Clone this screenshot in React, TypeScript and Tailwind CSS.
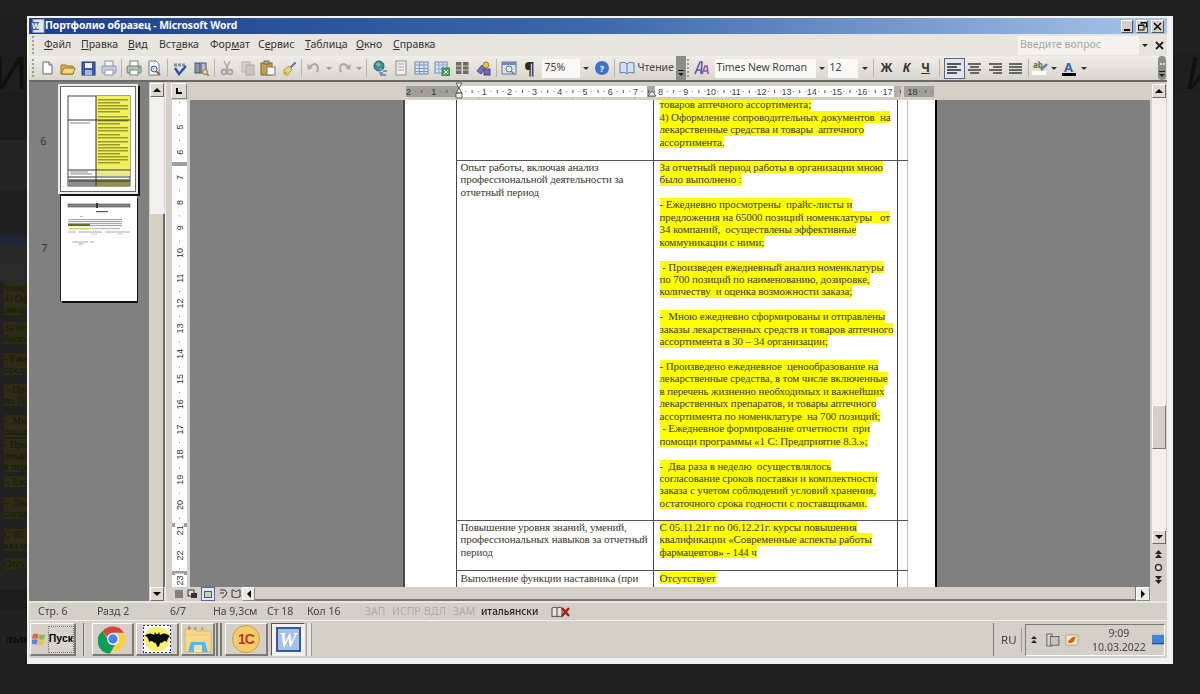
import React from 'react';

const uiFont = "font-['Noto_Sans','Liberation_Sans',sans-serif]";

const Gripper = ({ className = '' }: { className?: string }) => (
  <div className={`flex flex-col justify-center gap-[2px] ${className}`}>
    {[0, 1, 2, 3, 4].map((i) => (
      <div key={i} className="h-[2px] w-[2px] bg-[#a09c94]" />
    ))}
  </div>
);

const Sep = ({ className = 'w-[5px]' }: { className?: string }) => (
  <div className={`flex h-full items-center justify-center ${className}`}>
    <div className="h-[18px] w-[1px] bg-[#b8b4ac]" />
  </div>
);

const Drop = ({ className = 'w-[10px]', color = 'border-t-[#333]' }: { className?: string; color?: string }) => (
  <div className={`flex items-center justify-center ${className}`}>
    <div className={`h-0 w-0 border-x-[3px] border-t-[3px] border-x-transparent ${color}`} />
  </div>
);

const Slot = ({ children, className = 'w-[20.5px]' }: { children: React.ReactNode; className?: string }) => (
  <div className={`flex shrink-0 items-center justify-center ${className}`}>{children}</div>
);

const Ico = ({ children, w = 16 }: { children: React.ReactNode; w?: number }) => (
  <svg width={w} height={16} viewBox={`0 0 ${w} 16`}>
    {children}
  </svg>
);

const MenuItem = ({ before = '', hot, after, className }: { before?: string; hot: string; after: string; className: string }) => (
  <div className={`shrink-0 text-[10.5px] text-[#333] ${className}`}>
    {before}
    <span className="underline">{hot}</span>
    {after}
  </div>
);

const Toolbar = () => (
  <div className={`flex h-[24px] items-center bg-gradient-to-b from-[#f0eee8] to-[#d8d5cd] pl-[3px] ${uiFont}`}>
    <Gripper className="w-[5px]" />
    <Slot>
      <Ico>
        <path d="M4 2h6l3 3v9H4z" fill="#fff" stroke="#5a6a80" />
        <path d="M10 2v3h3" fill="#d8dce4" stroke="#5a6a80" />
      </Ico>
    </Slot>
    <Slot>
      <Ico>
        <path d="M1 5h5l1 1h6v8H1z" fill="#e6b04a" stroke="#96702a" />
        <path d="M4 8h11l-2 6H1z" fill="#f6d67c" stroke="#96702a" />
      </Ico>
    </Slot>
    <Slot>
      <Ico>
        <rect x="2" y="2" width="13" height="13" fill="#3c5aa8" stroke="#24387c" />
        <rect x="5" y="3" width="7" height="5" fill="#eef2fa" />
        <rect x="5" y="10" width="7" height="5" fill="#a8b4d4" />
      </Ico>
    </Slot>
    <Slot>
      <Ico>
        <rect x="4" y="1" width="8" height="6" fill="#f4f4f4" stroke="#8c94a8" />
        <rect x="1" y="6" width="14" height="7" rx="1" fill="#c8d0e0" stroke="#8c94a8" />
        <rect x="4" y="10" width="8" height="5" fill="#fff" stroke="#8c94a8" />
      </Ico>
    </Slot>
    <Sep className="w-[4.5px]" />
    <Slot>
      <Ico>
        <rect x="4" y="1" width="8" height="6" fill="#fff" stroke="#78847c" />
        <rect x="1" y="6" width="14" height="7" rx="1" fill="#b4c4b8" stroke="#6c7c70" />
        <rect x="4" y="10" width="8" height="5" fill="#f8f8f8" stroke="#78847c" />
        <circle cx="13" cy="8" r="1" fill="#4ca04c" />
      </Ico>
    </Slot>
    <Slot>
      <Ico>
        <path d="M3 1h7l3 3v11H3z" fill="#fff" stroke="#6c7890" />
        <circle cx="8" cy="9" r="3" fill="#cfe0f4" stroke="#3c5a98" />
        <path d="M10 11l4 4" stroke="#8c6c30" strokeWidth="2" />
      </Ico>
    </Slot>
    <Sep className="w-[5.5px]" />
    <Slot>
      <Ico>
        <path d="M2 5h12" stroke="#7c8ca8" strokeWidth="3" strokeDasharray="3 1" />
        <path d="M3 8l4 6 7-8" stroke="#2c50a8" strokeWidth="2.4" fill="none" />
      </Ico>
    </Slot>
    <Slot>
      <Ico>
        <rect x="2" y="3" width="5" height="10" fill="#8c94b0" stroke="#4c5474" />
        <rect x="8" y="3" width="5" height="10" fill="#b4bcd4" stroke="#4c5474" />
        <circle cx="12" cy="12" r="2.5" fill="#e8d8a0" stroke="#8c7830" />
        <path d="M14 14l2 2" stroke="#8c7830" strokeWidth="1.6" />
      </Ico>
    </Slot>
    <Sep className="w-[6px]" />
    <Slot>
      <Ico>
        <path d="M5 1l4 8M11 1L7 9" stroke="#a8a8a8" strokeWidth="1.4" />
        <circle cx="5" cy="12" r="2.4" fill="none" stroke="#a0a0a0" strokeWidth="1.6" />
        <circle cx="11" cy="12" r="2.4" fill="none" stroke="#a0a0a0" strokeWidth="1.6" />
      </Ico>
    </Slot>
    <Slot>
      <Ico>
        <rect x="2" y="2" width="8" height="10" fill="#d4d2cc" stroke="#b4b2ac" />
        <rect x="6" y="5" width="8" height="10" fill="#c8c6c0" stroke="#aaa8a2" />
      </Ico>
    </Slot>
    <Slot>
      <Ico>
        <rect x="1" y="3" width="11" height="12" fill="#c89c50" stroke="#806430" />
        <rect x="4" y="1" width="5" height="3" fill="#b8b4ac" stroke="#6c6860" />
        <rect x="7" y="7" width="8" height="8" fill="#f8f8f0" stroke="#78787c" />
      </Ico>
    </Slot>
    <Slot>
      <Ico>
        <path d="M9 7l5-5 1 1-5 5z" fill="#6c86b8" stroke="#40588c" strokeWidth=".6" />
        <path d="M3 10l5-4 3 3-4 6H4l1-3-2 2z" fill="#ecd06c" stroke="#a88c34" strokeWidth=".7" />
      </Ico>
    </Slot>
    <Sep />
    <Slot className="w-[18.5px]">
      <Ico>
        <path d="M4 7l5-3c4 0 5 4 3 8" fill="none" stroke="#a8a8a4" strokeWidth="2" />
        <path d="M2 4l1 6 5-2z" fill="#a8a8a4" />
      </Ico>
    </Slot>
    <Drop className="w-[12px]" color="border-t-[#999]" />
    <Slot>
      <Ico>
        <path d="M12 7L7 4c-4 0-5 4-3 8" fill="none" stroke="#a8a8a4" strokeWidth="2" />
        <path d="M14 4l-1 6-5-2z" fill="#a8a8a4" />
      </Ico>
    </Slot>
    <Drop className="w-[8px]" color="border-t-[#999]" />
    <Sep className="w-[7px]" />
    <Slot>
      <Ico>
        <circle cx="7" cy="6" r="5" fill="#3c8c9c" stroke="#2c5c70" />
        <path d="M4 4l3-2 2 3-3 2zM7 8l3 1-1 2z" fill="#7cc47c" />
        <path d="M7 13h4M11 11h4M8 15h6" stroke="#5c7cb0" strokeWidth="1.6" />
      </Ico>
    </Slot>
    <Slot>
      <Ico>
        <rect x="3" y="1" width="10" height="14" fill="#f0f0ec" stroke="#8c8c84" />
        <path d="M5 4h6M5 7h6M5 10h6" stroke="#a0a0a8" />
      </Ico>
    </Slot>
    <Slot>
      <Ico>
        <rect x="2" y="2" width="13" height="12" fill="#dce6f6" stroke="#6a86b6" />
        <path d="M2 5h13M2 8.500h13M2 11.500h13M6.500 2v12M11 2v12" stroke="#7c96c4" />
      </Ico>
    </Slot>
    <Slot>
      <Ico>
        <rect x="1" y="2" width="12" height="11" fill="#dce6f6" stroke="#6a86b6" />
        <path d="M1 5h12M1 9h12M5 2v11M9 2v11" stroke="#8ca4cc" />
        <rect x="8" y="8" width="8" height="8" fill="#4ca85c" stroke="#2c7c40" />
        <path d="M10 10l4 4M14 10l-4 4" stroke="#fff" />
      </Ico>
    </Slot>
    <Slot>
      <Ico>
        <rect x="2" y="2" width="5.500" height="12" fill="#6c6c64" />
        <rect x="9" y="2" width="5.500" height="12" fill="#6c6c64" />
        <path d="M2 6h5.500M2 10h5.500M9 6h5.500M9 10h5.500" stroke="#c8c8c0" />
      </Ico>
    </Slot>
    <Slot>
      <Ico>
        <path d="M2 11l5-6 3 4-4 5z" fill="#6878c0" stroke="#44508c" />
        <circle cx="11" cy="5" r="3" fill="#e8c050" stroke="#a08420" />
        <rect x="9" y="9" width="6" height="6" fill="#7c64b8" stroke="#50408c" />
      </Ico>
    </Slot>
    <Sep className="w-[6px]" />
    <Slot>
      <Ico>
        <rect x="1" y="2" width="14" height="12" fill="#d8e4f4" stroke="#5c7898" />
        <rect x="1" y="2" width="14" height="3" fill="#6c8cb8" />
        <circle cx="8" cy="9" r="3" fill="#f4f4f0" stroke="#707c70" />
        <path d="M10 11l3 3" stroke="#707c70" strokeWidth="1.6" />
      </Ico>
    </Slot>
    <Slot className="w-[20px] text-[16px] font-bold leading-none text-[#2a2a2a]">¶</Slot>
    <div className="ml-[2px] flex h-[19px] w-[38px] shrink-0 items-center bg-[#faf9f6] pl-[3px] text-[10.5px] text-[#444]">75%</div>
    <Drop className="w-[12px]" />
    <Slot className="w-[21px]">
      <div className="flex h-[14px] w-[14px] items-center justify-center rounded-full bg-[#3c74c8] text-[9px] font-bold leading-none text-white">?</div>
    </Slot>
    <Sep className="w-[4px]" />
    <Slot className="w-[21px]">
      <Ico>
        <path d="M1 3c3-1 5-1 7 1 2-2 4-2 7-1v10c-3-1-5-1-7 1-2-2-4-2-7-1z" fill="#d4dff0" stroke="#5c7ca8" />
        <path d="M8 4v10" stroke="#5c7ca8" />
      </Ico>
    </Slot>
    <div className="w-[38px] shrink-0 text-[10.5px] text-[#444]">Чтение</div>
    <div className="flex h-[24px] w-[10px] shrink-0 flex-col items-center justify-end bg-[#8c8c88] pb-[4px]">
      <div className="mb-[2px] h-[1px] w-[6px] bg-[#222]" />
      <div className="h-0 w-0 border-x-[3px] border-t-[3px] border-x-transparent border-t-[#222]" />
    </div>
    <Gripper className="ml-[1px] w-[3px]" />
    <Slot className="ml-[2px] w-[20px]">
      <svg width="16" height="16" viewBox="0 0 16 16">
        <path d="M1 14L6 2h2l-1 12M2.500 10h5" fill="none" stroke="#4c5ca8" strokeWidth="1.6" />
        <path d="M8 14l3-8h2l1 8M9.500 11h4" fill="none" stroke="#a04ca0" strokeWidth="1.6" />
      </svg>
    </Slot>
    <div className="ml-[3px] flex h-[19px] w-[101px] shrink-0 items-center bg-[#faf9f6] pl-[2px] text-[10.5px] tracking-[-0.1px] text-[#444]">Times New Roman</div>
    <Drop className="w-[12px]" />
    <div className="flex h-[19px] w-[30px] shrink-0 items-center bg-[#faf9f6] pl-[2px] text-[10.5px] text-[#444]">12</div>
    <Drop className="ml-[1px] w-[12px]" />
    <Sep className="w-[6px]" />
    <Slot className="w-[20px] text-[12px] font-bold text-[#333]">Ж</Slot>
    <Slot className="w-[20px] text-[12px] font-bold italic text-[#333]">К</Slot>
    <Slot className="w-[18px] text-[12px] font-bold text-[#333] underline">Ч</Slot>
    <Sep className="w-[9px]" />
    <div className="flex h-[21px] w-[21px] shrink-0 flex-col items-center justify-center gap-[1px] border border-[#52699c] bg-[#dfe6f0]">
      <div className="h-[2px] w-[14px] bg-[#555]" />
      <div className="ml-[2px] h-[2px] w-[10px] self-start bg-[#555]" />
      <div className="h-[2px] w-[14px] bg-[#555]" />
      <div className="ml-[2px] h-[2px] w-[10px] self-start bg-[#555]" />
    </div>
    <div className="flex w-[20px] shrink-0 flex-col items-center gap-[1px]">
      <div className="h-[2px] w-[13px] bg-[#666]" />
      <div className="h-[2px] w-[9px] bg-[#666]" />
      <div className="h-[2px] w-[13px] bg-[#666]" />
      <div className="h-[2px] w-[9px] bg-[#666]" />
    </div>
    <div className="flex w-[20px] shrink-0 flex-col items-end gap-[1px] pr-[3px]">
      <div className="h-[2px] w-[13px] bg-[#666]" />
      <div className="h-[2px] w-[9px] bg-[#666]" />
      <div className="h-[2px] w-[13px] bg-[#666]" />
      <div className="h-[2px] w-[9px] bg-[#666]" />
    </div>
    <div className="flex w-[21px] shrink-0 flex-col items-center gap-[1px]">
      <div className="h-[2px] w-[13px] bg-[#666]" />
      <div className="h-[2px] w-[13px] bg-[#666]" />
      <div className="h-[2px] w-[13px] bg-[#666]" />
      <div className="h-[2px] w-[13px] bg-[#666]" />
    </div>
    <Sep className="w-[5px]" />
    <Slot className="w-[19px]">
      <svg width="16" height="16" viewBox="0 0 16 16">
        <rect x="0" y="11" width="14" height="4" fill="#fcfcf8" />
        <text x="1" y="8" fontSize="8" fontWeight="700" fill="#5c6c30">ab</text>
        <path d="M9 10l6-6" stroke="#5c7cb0" strokeWidth="2.4" />
      </svg>
    </Slot>
    <Drop className="w-[9px]" />
    <Slot className="ml-[2px] w-[16px]">
      <div className="flex flex-col items-center">
        <div className="text-[13px] font-bold leading-[12px] text-[#3c64a8]">A</div>
        <div className="h-[3px] w-[14px] bg-black" />
      </div>
    </Slot>
    <Drop className="ml-[2px] w-[10px]" />
    <div className="flex-1" />
    <div className="mr-[1px] flex h-[24px] w-[8px] shrink-0 flex-col items-center justify-end gap-[2px] rounded-sm bg-[#8c8c88] pb-[3px]">
      <div className="mb-[4px] flex gap-[1px]">
        <div className="h-[2px] w-[2px] bg-[#ddd]" />
        <div className="h-[2px] w-[2px] bg-[#ddd]" />
      </div>
      <div className="h-[1px] w-[6px] bg-[#222]" />
      <div className="h-0 w-0 border-x-[3px] border-t-[3px] border-x-transparent border-t-[#222]" />
    </div>
  </div>
);

const Arrow = ({ dir }: { dir: 'up' | 'down' | 'left' | 'right' }) => {
  if (dir === 'up') return <div className="h-0 w-0 border-x-[4px] border-b-[4px] border-x-transparent border-b-black" />;
  if (dir === 'down') return <div className="h-0 w-0 border-x-[4px] border-t-[4px] border-x-transparent border-t-black" />;
  if (dir === 'left') return <div className="h-0 w-0 border-y-[4px] border-r-[4px] border-y-transparent border-r-black" />;
  return <div className="h-0 w-0 border-y-[4px] border-l-[4px] border-y-transparent border-l-black" />;
};

const ScrollBtn = ({ dir, className = '' }: { dir: 'up' | 'down' | 'left' | 'right'; className?: string }) => (
  <div className={`flex h-[14px] w-[14px] shrink-0 items-center justify-center border border-b-[#6c6c6c] border-l-white border-r-[#6c6c6c] border-t-white bg-[#dedbd3] ${className}`}>
    <Arrow dir={dir} />
  </div>
);

const BrowseButtons = () => (
  <div className="flex flex-1 flex-col items-center justify-between pb-[3px] pt-[6px]">
    <svg width="9" height="9" viewBox="0 0 9 9"><path d="M4.500 0L8 4H1zM4.500 4L8 8H1z" fill="#222" /></svg>
    <svg width="9" height="9" viewBox="0 0 9 9"><circle cx="4.500" cy="4.500" r="3" fill="#e6e4de" stroke="#333" strokeWidth="1.400" /></svg>
    <svg width="9" height="9" viewBox="0 0 9 9"><path d="M1 1h7L4.500 5zM1 5h7L4.500 9z" fill="#222" /></svg>
  </div>
);

const ThumbPage6 = () => (
  <svg width="76" height="106" viewBox="0 0 76 106">
    <rect width="76" height="106" fill="#fff" />
    <rect x="7" y="9" width="62" height="90" fill="none" stroke="#444" strokeWidth="1" />
    <rect x="35" y="9" width="34" height="74" fill="#f0f060" />
    {[12, 15, 18, 21, 24, 29, 33, 36, 40, 43, 47, 50, 54, 57, 60, 63, 66, 69, 72, 75].map((y, i) => (
      <rect key={y} x="37" y={y} width={i % 3 === 1 ? 22 : 30} height="1.500" fill="#9a9a30" />
    ))}
    <rect x="35" y="84" width="34" height="5" fill="#ecec80" />
    <rect x="35" y="92" width="34" height="7" fill="#8f8f50" />
    <rect x="8" y="92" width="27" height="7" fill="#8c8c8c" />
    <path d="M35 9v90M7 33h62M7 83h62M7 90h62M7 94h62" stroke="#333" strokeWidth="1" />
    <path d="M9 36h20M9 85h18M9 87h22" stroke="#888" strokeWidth="1.200" />
  </svg>
);

const ThumbPage7 = () => (
  <svg width="76" height="105" viewBox="0 0 76 105">
    <rect width="76" height="105" fill="#fff" />
    <rect x="7" y="8" width="62" height="3" fill="#888" stroke="#444" strokeWidth=".6" />
    <rect x="35" y="7" width="2" height="5" fill="#333" />
    <rect x="35" y="15" width="12" height="1.200" fill="#555" />
    <rect x="19" y="20" width="3" height="1" fill="#bbb" />
    {[23, 25, 27, 29].map((y) => (
      <rect key={y} x="7" y={y} width="54" height="1.200" fill="#aaa" />
    ))}
    <rect x="7" y="28" width="22" height="2" fill="#6a6a20" />
    <rect x="8" y="32" width="22" height="1.500" fill="#d6d650" />
    <rect x="31" y="32" width="28" height="1.200" fill="#bbb" />
    <path d="M7 36h8M17 36h24M44 36h25" stroke="#aaa" strokeWidth="1.200" />
    <path d="M30 38h6M56 38h6" stroke="#ccc" />
    <path d="M11 46h16M29 46h4M17 48h5" stroke="#aaa" strokeWidth="1" />
  </svg>
);

const hTicks = Array.from({ length: 84 }, (_, i) => i - 8);

const HRuler = () => (
  <svg width="528" height="18" viewBox="0 0 528 18">
    <rect x="0" y="4" width="528" height="11" fill="#d4d0c8" />
    <rect x="0" y="4" width="53" height="11" fill="#a2a09a" />
    <rect x="53" y="4" width="188" height="11" fill="#fff" />
    <rect x="241" y="4" width="8" height="11" fill="#a8a6a0" />
    <rect x="249" y="4" width="239" height="11" fill="#fff" />
    <rect x="488" y="4" width="7" height="11" fill="#b2b0aa" />
    <rect x="498" y="4" width="30" height="11" fill="#a2a09a" />
    {hTicks.map((i) => {
      const x = 53 + i * 6.3;
      if (x < 1 || x > 527 || i % 4 === 0) return null;
      return i % 2 === 0 ? (
        <rect key={i} x={x} y="8" width="1" height="3" fill="#555" />
      ) : (
        <rect key={i} x={x} y="9" width="1" height="1" fill="#777" />
      );
    })}
    {[-2, -1, 1, 2, 3, 4, 5, 6, 7, 8, 9, 10, 11, 12, 13, 14, 15, 16, 17, 18].map((n) => (
      <text key={n} x={53 + n * 25.2} y="12.500" fontSize="9" fill={n === 18 || n < 0 ? '#333' : '#444'} textAnchor="middle" fontFamily="Liberation Sans, sans-serif">
        {Math.abs(n)}
      </text>
    ))}
    <path d="M50 1h6l-3 5zM50 11l3-5 3 5zM50 11h6v5h-6z" fill="#f4f2ec" stroke="#444" strokeWidth=".8" />
    <path d="M242 14l4-5 4 5z" fill="#f4f2ec" stroke="#444" strokeWidth=".8" />
    {[72, 102, 134, 166, 197, 228].map((x) => (
      <rect key={x} x={x} y="15.500" width="1" height="2" fill="#aaa" />
    ))}
  </svg>
);

const vNums = [5, 6, 7, 8, 9, 10, 11, 12, 13, 14, 15, 16, 17, 18, 19, 20, 21, 22, 23];

const VRuler = () => (
  <svg width="15" height="487" viewBox="0 0 15 487">
    <rect width="15" height="487" fill="#fff" />
    <rect y="62" width="15" height="4" fill="#a2a09a" />
    <rect y="423" width="15" height="4" fill="#a2a09a" />
    <rect y="471" width="15" height="4" fill="#a2a09a" />
    {Array.from({ length: 80 }, (_, i) => i).map((i) => {
      const y = 2 + i * 6.3;
      if (i % 4 === 1) return null;
      return i % 4 === 3 ? (
        <rect key={i} x="6" y={y} width="3" height="1" fill="#555" />
      ) : (
        <rect key={i} x="7" y={y} width="1" height="1" fill="#777" />
      );
    })}
    {vNums.map((n) => (
      <g key={n} transform={`translate(11 ${27 + (n - 5) * 25.2}) rotate(-90)`}>
        <rect x="-7" y="-8" width="14" height="9" fill="#fff" />
        <text fontSize="9" fill="#333" textAnchor="middle" fontFamily="Liberation Sans, sans-serif">
          {n}
        </text>
      </g>
    ))}
  </svg>
);

const Hl = ({ children }: { children: string }) => (
  <div className="block h-[12.45px] w-fit whitespace-pre bg-[#ffff00]">{children}</div>
);
const Blank = () => <div className="h-[12.45px]" />;
const Plain = ({ children }: { children: string }) => <div className="h-[12.45px] whitespace-pre">{children}</div>;

const Page = () => (
  <div className="flex h-full w-[534px] shrink-0 flex-col overflow-hidden border-l-[2px] border-r-[2px] border-l-[#4a4a4a] border-r-black bg-white pl-[51px] font-['Liberation_Serif',serif] text-[11px] leading-[12.45px] tracking-[-0.12px] text-[#3a3a2a]">
    <div className="flex h-[61px] w-[452px] shrink-0 border-b-[1.500px] border-[#555]">
      <div className="h-full w-[198px] border-l-[1.500px] border-r-[1.500px] border-[#444]" />
      <div className="flex h-full w-[243.500px] flex-col justify-end border-r-[1.500px] border-[#444] pb-[12px] pl-[5.500px]">
        <Hl>товаров аптечного ассортимента;</Hl>
        <Hl>4) Оформление сопроводительных документов  на</Hl>
        <Hl>лекарственные средства и товары  аптечного</Hl>
        <Hl>ассортимента.</Hl>
      </div>
      <div className="h-full w-[10px] border-r border-[#c4c4c4]" />
    </div>
    <div className="flex h-[360px] w-[452px] shrink-0 border-b-[1.500px] border-[#555]">
      <div className="h-full w-[198px] border-l-[1.500px] border-r-[1.500px] border-[#444] pl-[3.500px]">
        <Plain>Опыт работы, включая анализ</Plain>
        <Plain>профессиональной деятельности за</Plain>
        <Plain>отчетный период</Plain>
      </div>
      <div className="h-full w-[243.500px] border-r-[1.500px] border-[#444] pl-[5.500px]">
        <Hl>За отчетный период работы в организации мною</Hl>
        <Hl>было выполнено :</Hl>
        <Blank />
        <Hl>- Ежедневно просмотрены  прайс-листы и</Hl>
        <Hl>предложения на 65000 позиций номенклатуры   от</Hl>
        <Hl>34 компаний,  осуществлены эффективные</Hl>
        <Hl>коммуникации с ними;</Hl>
        <Blank />
        <Hl> - Произведен ежедневный анализ номенклатуры</Hl>
        <Hl>по 700 позиций по наименованию, дозировке,</Hl>
        <Hl>количеству  и оценка возможности заказа;</Hl>
        <Blank />
        <Hl>-  Мною ежедневно сформированы и отправлены</Hl>
        <Hl>заказы лекарственных средств и товаров аптечного</Hl>
        <Hl>ассортимента в 30 – 34 организации;</Hl>
        <Blank />
        <Hl>- Произведено ежедневное  ценообразование на</Hl>
        <Hl>лекарственные средства, в том числе включенные</Hl>
        <Hl>в перечень жизненно необходимых и важнейших</Hl>
        <Hl>лекарственных препаратов, и товары аптечного</Hl>
        <Hl>ассортимента по номенклатуре  на 700 позиций;</Hl>
        <Hl> - Ежедневное формирование отчетности  при</Hl>
        <Hl>помощи программы «1 С: Предприятие 8.3.»;</Hl>
        <Blank />
        <Hl>-  Два раза в неделю  осуществлялось</Hl>
        <Hl>согласование сроков поставки и комплектности</Hl>
        <Hl>заказа с учетом соблюдений условий хранения,</Hl>
        <Hl>остаточного срока годности с поставщиками.</Hl>
      </div>
      <div className="h-full w-[10px] border-r border-[#c4c4c4]" />
    </div>
    <div className="flex h-[50px] w-[452px] shrink-0 border-b-[1.500px] border-[#555]">
      <div className="h-full w-[198px] border-l-[1.500px] border-r-[1.500px] border-[#444] pl-[3.500px]">
        <Plain>Повышение уровня знаний, умений,</Plain>
        <Plain>профессиональных навыков за отчетный</Plain>
        <Plain>период</Plain>
      </div>
      <div className="h-full w-[243.500px] border-r-[1.500px] border-[#444] pl-[5.500px]">
        <Hl>С 05.11.21г по 06.12.21г. курсы повышения</Hl>
        <Hl>квалификации «Современные аспекты работы</Hl>
        <Hl>фармацевтов» - 144 ч</Hl>
      </div>
      <div className="h-full w-[10px] border-r border-[#c4c4c4]" />
    </div>
    <div className="flex h-[40px] w-[452px] shrink-0">
      <div className="h-full w-[198px] border-l-[1.500px] border-r-[1.500px] border-[#444] pl-[3.500px] pt-[0.500px]">
        <Plain>Выполнение функции наставника (при</Plain>
        <Plain>наличии)</Plain>
      </div>
      <div className="h-full w-[243.500px] border-r-[1.500px] border-[#444] pl-[5.500px] pt-[0.500px]">
        <Hl>Отсутствует</Hl>
      </div>
      <div className="h-full w-[10px] border-r border-[#c4c4c4]" />
    </div>
  </div>
);

const StartLogo = () => (
  <svg width="18" height="18" viewBox="0 0 18 18">
    <path d="M1 4c2-1 4-1 6 0l-1 5c-2-1-4-1-6 0z" fill="#e2603c" />
    <path d="M8 4c2 1 4 1 6 0l-1 5c-2 1-4 1-6 0z" fill="#8cb84c" />
    <path d="M0 10c2-1 4-1 6 0l-1 5c-2-1-4-1-6 0z" fill="#4c8ce0" />
    <path d="M7 10c2 1 4 1 6 0l-1 5c-2 1-4 1-6 0z" fill="#f0c040" />
  </svg>
);

const Chrome = () => (
  <svg width="30" height="30" viewBox="0 0 48 48">
    <path d="M24 4a20 20 0 0 1 17.320 10H24a10 10 0 0 0-9.500 6.900L7.600 11.200A20 20 0 0 1 24 4z" fill="#db4437" />
    <path d="M7.600 11.200l9.200 15.900a10 10 0 0 0 10.300 6.400l-8.400 14A20 20 0 0 1 7.600 11.200z" fill="#0f9d58" />
    <path d="M41.320 14A20 20 0 0 1 22 43.900l9.200-15.900A10 10 0 0 0 31 17z" fill="#ffcd40" />
    <circle cx="24" cy="24" r="9.500" fill="#fff" />
    <circle cx="24" cy="24" r="7.500" fill="#4285f4" />
  </svg>
);

const Batman = () => (
  <svg width="28" height="28" viewBox="0 0 28 28">
    <rect width="28" height="28" fill="#fff" />
    <rect width="28" height="28" fill="none" stroke="#26308c" strokeWidth="2" strokeDasharray="2 2" />
    <ellipse cx="14" cy="14" rx="13" ry="12.500" fill="#f8f070" />
    <path d="M1 11c4-3 7-3 8-2l2 1 1-3 1 2h2l1-2 1 3 2-1c1-1 4-1 8 2-2 2-3 4-3 6-2-2-4-1-5 1-1-1-2-1-3 4-1-1-1-1-2 0-1-5-2-5-3-4-1-2-3-3-5-1 0-2-1-4-3-6z" fill="#0a0a0a" />
  </svg>
);

const FolderIcon = () => (
  <svg width="30" height="30" viewBox="0 0 30 30">
    <path d="M2 5h9l2 2h15v21H2z" fill="#f6d98a" stroke="#d6b866" />
    <rect x="5" y="2.500" width="2.500" height="3" fill="#d86a5a" />
    <rect x="11" y="3" width="2.500" height="3" fill="#7cb86c" />
    <rect x="18" y="3" width="2.500" height="3" fill="#e0a050" />
    <path d="M2 11h26" stroke="#e8c670" />
    <path d="M8 18h14l3 10H5z" fill="#5cb4e8" />
    <rect x="11" y="21" width="8" height="7" fill="#f6e2a4" />
  </svg>
);

const TaskBtn = ({ children, className }: { children: React.ReactNode; className: string }) => (
  <div className={`flex h-[33px] shrink-0 items-center justify-center border-b-[2px] border-l border-r-[2px] border-t border-b-[#7c7a74] border-l-white border-r-[#7c7a74] border-t-white bg-[#d4d0c8] ${className}`}>
    {children}
  </div>
);

const Grip = ({ className = '' }: { className?: string }) => (
  <div className={`h-[33px] w-[1px] shrink-0 border-r border-[#7c7a74] bg-white ${className}`} />
);

const Dim = ({ w, children }: { w: string; children: string }) => (
  <div className={`h-[11px] overflow-hidden whitespace-pre bg-[#2c2c14] font-['Liberation_Serif',serif] text-[10px] leading-[11px] text-[#161608] ${w}`}>{children}</div>
);

const LeftStrip = () => (
  <div className="flex h-full w-[27px] shrink-0 flex-col overflow-hidden bg-[#202020]">
    <div className="h-[17px] shrink-0 bg-[#212121]" />
    <div className="h-[36px] shrink-0 bg-[#1e1e1e]" />
    <div className="flex h-[40px] shrink-0 items-center justify-end bg-[#1e1e1e] font-['Liberation_Sans',sans-serif] text-[46px] font-light leading-none text-[#0f0f0f]">И</div>
    <div className="h-[47px] shrink-0 bg-[#1c1c1c]" />
    <div className="h-[50px] shrink-0 bg-[#252525]" />
    <div className="h-[46px] shrink-0 bg-[#1f1f1f]" />
    <div className="h-[8px] shrink-0 bg-[#1a2536]" />
    <div className="h-[22px] shrink-0 bg-[#282828]" />
    <div className="h-[16px] shrink-0 bg-[#2a2a28]" />
    <div className="flex flex-col">
      <Dim w="ml-[4px]">{'товаров'}</Dim>
      <Dim w="ml-[4px]">{'4) Офор'}</Dim>
      <Dim w="ml-[4px] mb-[7px]">{'лекарс'}</Dim>
      <Dim w="ml-[4px]">{'За отчё'}</Dim>
      <Dim w="ml-[4px] mb-[9px]">{'было в'}</Dim>
      <Dim w="ml-[4px]">{'- Ежед'}</Dim>
      <Dim w="ml-[4px] mb-[9px]">{'предло'}</Dim>
      <Dim w="ml-[4px]">{' - Про'}</Dim>
      <Dim w="ml-[4px] mb-[9px]">{'по 700'}</Dim>
      <Dim w="ml-[4px]">{'-  Мно'}</Dim>
      <Dim w="ml-[4px] mb-[2px]">{'заказы'}</Dim>
      <Dim w="ml-[4px]">{'- Прои'}</Dim>
      <Dim w="ml-[4px]">{'лекарс'}</Dim>
      <Dim w="ml-[4px] mb-[4px]">{'в переч'}</Dim>
      <Dim w="ml-[4px] mb-[10px]">{' - Еже'}</Dim>
      <Dim w="ml-[4px]">{'-  Два'}</Dim>
      <Dim w="ml-[4px] mb-[10px]">{'соглас'}</Dim>
      <Dim w="ml-[4px]">{'С 05.1'}</Dim>
      <Dim w="ml-[4px] mb-[7px]">{'квалиф'}</Dim>
      <Dim w="ml-[4px]">{'Отсут'}</Dim>
    </div>
    <div className="h-[20px] shrink-0 bg-[#222]" />
    <div className="h-[20px] shrink-0 bg-[#1c1c1c]" />
    <div className="h-[22px] shrink-0 bg-[#212121]" />
    <div className="flex h-[16px] shrink-0 items-center justify-end whitespace-nowrap bg-[#212121] font-['Liberation_Serif',serif] text-[13px] font-bold text-[#0a0a0a]">льн</div>
    <div className="flex-1 bg-[#212121]" />
  </div>
);

const RightStrip = () => (
  <div className="flex h-full w-[27px] shrink-0 flex-col overflow-hidden bg-[#202020]">
    <div className="h-[53px] shrink-0 bg-[#212121]" />
    <div className="flex h-[40px] shrink-0 items-center justify-start bg-[#1e1e1e] pl-[13px] font-['Liberation_Sans',sans-serif] text-[46px] italic leading-none text-[#0f0f0f]">И</div>
    <div className="flex-1 bg-[#202020]" />
  </div>
);

export default function App() {
  return (
    <div className="flex h-[694px] w-[1200px] overflow-hidden bg-[#202020]">
      <LeftStrip />
      <div className={`mt-[16px] flex h-[648px] w-[1146px] shrink-0 flex-col border-b-[6px] border-l-[2px] border-r-[6px] border-t-[2px] border-[#f2f2ee] blur-[0.5px] ${uiFont}`}>
        {/* title bar */}
        <div className="flex h-[16px] shrink-0 items-center bg-gradient-to-r from-[#1d3f8e] via-[#3d68ac] to-[#a9c5ea] pl-[2px] pr-[3px]">
          <svg width="14" height="14" viewBox="0 0 14 14">
            <rect x="2" y="0.500" width="11" height="13" fill="#dfe6f4" stroke="#8ca0c8" />
            <rect x="0" y="3" width="8" height="8" fill="#3c5ca8" />
            <text x="1" y="10" fontSize="8" fontWeight="700" fill="#fff">W</text>
          </svg>
          <div className="text-[10.4px] font-bold tracking-[-0.1px] text-white">Портфолио образец - Microsoft Word</div>
          <div className="flex-1" />
          <div className="flex h-[13px] w-[12px] items-end justify-center border border-b-[#555] border-l-white border-r-[#555] border-t-white bg-[#d4d0c8] pb-[1px]">
            <div className="h-[2px] w-[6px] bg-black" />
          </div>
          <div className="ml-[3px] flex h-[13px] w-[12px] items-center justify-center border border-b-[#555] border-l-white border-r-[#555] border-t-white bg-[#d4d0c8]">
            <svg width="9" height="9" viewBox="0 0 9 9">
              <path d="M3 2V0.500h5.500v4.500H7M0.500 3h5.500v5H0.500z" fill="none" stroke="#000" />
              <path d="M0.500 3.500h5.500M3 1h5.500" stroke="#000" />
            </svg>
          </div>
          <div className="ml-[3px] flex h-[13px] w-[13px] items-center justify-center border border-b-[#555] border-l-white border-r-[#555] border-t-white bg-[#d4d0c8]">
            <svg width="9" height="9" viewBox="0 0 9 9">
              <path d="M1 1l7 7M8 1L1 8" stroke="#000" strokeWidth="1.500" />
            </svg>
          </div>
        </div>
        {/* menu */}
        <div className="flex h-[22px] shrink-0 items-center bg-[#e8e5de] pl-[3px]">
          <Gripper className="w-[5px]" />
          <MenuItem hot="Ф" after="айл" className="ml-[7px] w-[37px]" />
          <MenuItem hot="П" after="равка" className="w-[47px]" />
          <MenuItem hot="В" after="ид" className="w-[31px]" />
          <MenuItem before="Вст" hot="а" after="вка" className="w-[51px]" />
          <MenuItem before="Фор" hot="м" after="ат" className="w-[48px]" />
          <MenuItem before="С" hot="е" after="рвис" className="w-[47px]" />
          <MenuItem hot="Т" after="аблица" className="w-[51px]" />
          <MenuItem hot="О" after="кно" className="w-[37px]" />
          <MenuItem hot="С" after="правка" className="w-[50px]" />
          <div className="flex-1" />
          <div className="flex h-[19px] w-[121px] items-center bg-[#f4f3ef] pl-[2px] text-[10.5px] text-[#a8a8a8]">Введите вопрос</div>
          <Drop className="ml-[2px] w-[8px]" color="border-t-[#222]" />
          <div className="ml-[5px] mr-[3px] flex w-[10px] items-center justify-center">
            <svg width="9" height="9" viewBox="0 0 9 9">
              <path d="M1 1l7 7M8 1L1 8" stroke="#222" strokeWidth="1.800" />
            </svg>
          </div>
        </div>
        <Toolbar />
        <div className="h-[2px] shrink-0 bg-[#6a6a66]" />
        {/* main */}
        <div className="flex h-[519px] shrink-0 bg-[#d4d0c8]">
          {/* thumbnails */}
          <div className="flex h-full w-[120px] shrink-0 flex-col bg-[#808080]">
            <div className="flex h-[112px] shrink-0 items-start pt-[2px]">
              <div className="flex h-full w-[29px] items-center justify-center pt-[4px] text-[11px] text-[#333]">6</div>
              <div className="h-[110px] w-[80px] border-2 border-[#ecebe6] shadow-[2px_2px_0_#111]">
                <div className="border-[1px] border-[#666] bg-white">
                  <div className="h-[104px] overflow-hidden">
                    <ThumbPage6 />
                  </div>
                </div>
              </div>
            </div>
            <div className="flex h-[108px] shrink-0 items-start pt-[2px]">
              <div className="flex h-[105px] w-[31px] items-center justify-center text-[11px] text-[#333]">7</div>
              <div className="h-[105px] w-[76px] border-l border-[#222] shadow-[2px_2px_0_#111]">
                <ThumbPage7 />
              </div>
            </div>
          </div>
          {/* thumbnail scrollbar */}
          <div className="flex h-full w-[16px] shrink-0 flex-col pl-[1px]">
            <ScrollBtn dir="up" className="mt-[1px]" />
            <div className="h-[117px] w-[14px] shrink-0 bg-[#f1f0ec]" />
            <div className="flex-1 border-r-[2px] border-r-[#6a6a66] bg-[#d4d0c8]" />
            <ScrollBtn dir="down" />
          </div>
          <div className="h-full w-[6px] shrink-0 border-l border-[#f4f2ec] bg-[#d4d0c8]" />
          {/* editor */}
          <div className="flex h-full flex-1 flex-col">
            <div className="flex h-[505px] shrink-0">
              <div className="flex w-[979px] shrink-0 flex-col">
                <div className="flex h-[18px] shrink-0 items-center">
                  <div className="flex h-[16px] w-[16px] items-center justify-center border border-b-[#888] border-l-white border-r-[#888] border-t-white bg-[#dedbd3]">
                    <div className="h-[6px] w-[6px] border-b-[2px] border-l-[2px] border-black" />
                  </div>
                  <div className="ml-[219px]">
                    <HRuler />
                  </div>
                </div>
                <div className="flex h-[487px] shrink-0">
                  <div className="h-full w-[19px] shrink-0 pl-[1px]">
                    <VRuler />
                  </div>
                  <div className="flex h-full flex-1 bg-[#808080] pl-[213px]">
                    <Page />
                  </div>
                </div>
              </div>
              <div className="flex h-full w-[17px] shrink-0 flex-col items-center">
                <ScrollBtn dir="up" className="mt-[2px]" />
                <div className="h-[307px] w-[14px] shrink-0 bg-[#f1f0ec]" />
                <div className="h-[44px] w-[14px] shrink-0 border border-b-[#777] border-l-white border-r-[#777] border-t-white bg-[#d4d0c8]" />
                <div className="h-[81px] w-[14px] shrink-0 bg-[#f1f0ec]" />
                <ScrollBtn dir="down" />
                <BrowseButtons />
              </div>
            </div>
            <div className="flex h-[14px] shrink-0 items-center">
              <div className="flex h-full w-[71px] shrink-0 items-center gap-[3px] pl-[3px]">
                <svg width="10" height="10" viewBox="0 0 10 10"><path d="M1 2h8M1 4h8M1 6h8M1 8h8" stroke="#333" /></svg>
                <svg width="11" height="10" viewBox="0 0 11 10"><rect x="1" y="1" width="6" height="6" fill="#ddd" stroke="#333" /><rect x="4" y="4" width="6" height="5" fill="#333" /></svg>
                <div className="flex h-[14px] w-[14px] items-center justify-center border border-[#52699c] bg-[#e4e8ef]">
                  <div className="h-[7px] w-[8px] border border-[#555] bg-[#ccc]" />
                </div>
                <svg width="10" height="10" viewBox="0 0 10 10"><path d="M2 1h5l2 3-2 3-3 2M2 4h4" fill="none" stroke="#333" /></svg>
                <svg width="10" height="10" viewBox="0 0 10 10"><path d="M1 1c2 0 3 1 4 2 1-1 2-2 4-2v7c-2 0-3 0-4 1-1-1-2-1-4-1z" fill="none" stroke="#333" /></svg>
              </div>
              <div className="flex h-full w-[13px] shrink-0 items-center justify-center border border-b-[#888] border-l-white border-r-[#888] border-t-white bg-[#eceae4]">
                <Arrow dir="left" />
              </div>
              <div className="h-full w-[881px] shrink-0 border-b-[2px] border-r border-[#777] border-l-white bg-[#d4d0c8]" />
              <div className="flex h-full w-[14px] shrink-0 items-center justify-center border border-b-[#888] border-l-white border-r-[#888] border-t-white bg-[#eceae4]">
                <Arrow dir="right" />
              </div>
            </div>
          </div>
        </div>
        {/* status bar */}
        <div className="flex h-[20px] shrink-0 items-center border-b border-t-[2px] border-b-[#f2f0ea] border-t-[#e8e6df] bg-[#d4d0c8] pl-[9px] text-[10.5px] text-[#444]">
          <div className="w-[59px] shrink-0">Стр.  6</div>
          <div className="w-[73px] shrink-0">Разд  2</div>
          <div className="w-[43px] shrink-0">6/7</div>
          <div className="w-[54px] shrink-0">На  9,3см</div>
          <div className="w-[40px] shrink-0">Ст  18</div>
          <div className="w-[58px] shrink-0">Кол  16</div>
          <div className="w-[27px] shrink-0 text-[#aaa]">ЗАП</div>
          <div className="w-[32px] shrink-0 text-[#aaa]">ИСПР</div>
          <div className="w-[29px] shrink-0 text-[#aaa]">ВДЛ</div>
          <div className="w-[28px] shrink-0 text-[#aaa]">ЗАМ</div>
          <div className="w-[70px] shrink-0 text-[10px] font-medium text-[#222]">итальянски</div>
          <svg width="20" height="14" viewBox="0 0 20 14">
            <path d="M1 3c2-1 4-1 5 0 1-1 3-1 5 0v9c-2-1-4-1-5 0-1-1-3-1-5 0z" fill="#e8e4dc" stroke="#444" />
            <path d="M6 3v9" stroke="#444" />
            <path d="M11 3l7 8M18 3l-7 8" stroke="#b01818" strokeWidth="2.400" />
          </svg>
        </div>
        {/* taskbar */}
        <div className="flex h-[37px] shrink-0 items-center bg-[#d4d0c8] pl-[1px] pr-[2px]">
          <TaskBtn className="w-[46px] justify-start pl-[1px]">
            <StartLogo />
            <div className="ml-[-1px] flex h-[27px] flex-1 items-center justify-center border border-dotted border-[#777] bg-[#d8d4cc] font-['Liberation_Sans',sans-serif] text-[10.5px] font-bold text-black">Пуск</div>
          </TaskBtn>
          <Grip className="ml-[7px]" />
          <TaskBtn className="ml-[8px] w-[42px]"><Chrome /></TaskBtn>
          <TaskBtn className="ml-[2px] w-[43px]"><Batman /></TaskBtn>
          <TaskBtn className="ml-[2px] w-[34px]"><FolderIcon /></TaskBtn>
          <div className="ml-[1px] h-[33px] w-[6px] shrink-0 border-x-[2px] border-x-[#7c7a74] bg-[#d4d0c8]" />
          <TaskBtn className="ml-[3px] w-[43px]">
            <div className="flex h-[28px] w-[28px] items-center justify-center rounded-full border border-[#d0a038] bg-[#f4cc6c] font-['Liberation_Sans',sans-serif] text-[14px] font-bold tracking-[-1px] text-[#c4301c]">1С</div>
          </TaskBtn>
          <div className="ml-[3px] flex h-[33px] w-[34px] shrink-0 items-center justify-center border border-b-[#eee] border-l-[#555] border-r-[#eee] border-t-[#555] bg-[#f5f4f0]">
            <div className="flex h-[25px] w-[25px] items-center justify-center border-[2px] border-[#2c5ca4] bg-[#a8c0e8] font-['Liberation_Serif',serif] text-[20px] font-bold italic leading-none text-white">W</div>
          </div>
          <div className="ml-[1px] h-[33px] w-[6px] shrink-0 border-x border-x-[#999] bg-[#e8e6df]" />
          <div className="flex-1" />
          <Grip className="mr-[7px]" />
          <div className="w-[18px] shrink-0 text-[11.5px] text-[#444]">RU</div>
          <div className="ml-[2px] mr-[3px] h-[24px] w-[1px] shrink-0 bg-[#999]" />
          <div className="flex h-[32px] w-[140px] shrink-0 items-center border border-b-white border-l-[#777] border-r-white border-t-[#777] pl-[3px]">
            <div className="flex w-[11px] flex-col items-center gap-[1px] text-[#222]">
              <div className="h-0 w-0 border-x-[3px] border-b-[3px] border-x-transparent border-b-[#222]" />
              <div className="h-0 w-0 border-x-[3px] border-b-[3px] border-x-transparent border-b-[#222]" />
            </div>
            <svg className="ml-[8px]" width="16" height="16" viewBox="0 0 16 16">
              <rect x="1" y="1" width="6" height="14" fill="#d8d8d0" stroke="#555" />
              <rect x="5" y="4" width="10" height="10" fill="#c4c4bc" stroke="#555" />
            </svg>
            <svg className="ml-[5px]" width="16" height="16" viewBox="0 0 16 16">
              <rect x="1" y="2" width="14" height="12" rx="1" fill="#f2e8c8" stroke="#a8a078" />
              <path d="M3 10l5-5 5-1-3 6-4 2z" fill="#d0641c" />
            </svg>
            <div className="ml-[8px] flex w-[64px] shrink-0 flex-col items-center text-[10.5px] leading-[14px] text-[#444]">
              <div>9:09</div>
              <div>10.03.2022</div>
            </div>
            <svg className="ml-[1px]" width="14" height="12" viewBox="0 0 14 12">
              <rect width="14" height="9" fill="#3f86d6" />
              <rect y="9" width="14" height="2" fill="#1e4f8c" />
            </svg>
          </div>
        </div>
      </div>
      <RightStrip />
    </div>
  );
}
